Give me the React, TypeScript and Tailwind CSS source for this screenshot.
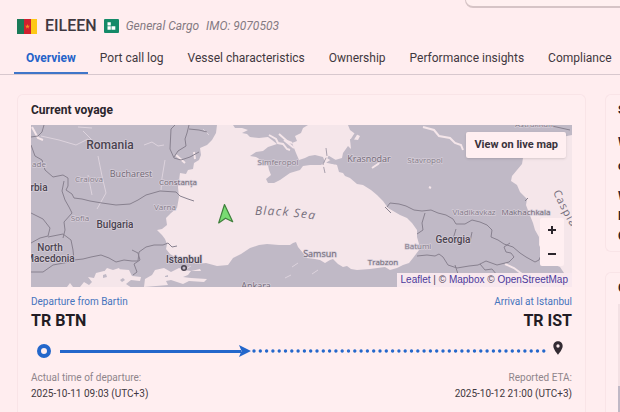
import React from "react";
import { MdLocationOn } from "react-icons/md";

interface MapLabel {
  text: string;
  x: number;
  y: number;
  kind: "country" | "city" | "town" | "small" | "faint";
}

const tabs = [
  "Overview",
  "Port call log",
  "Vessel characteristics",
  "Ownership",
  "Performance insights",
  "Compliance",
];

const labels: MapLabel[] = [
  { text: "Romania", x: 79, y: 24, kind: "country" },
  { text: "Bulgaria", x: 84, y: 103, kind: "city" },
  { text: "Georgia", x: 422, y: 118, kind: "city" },
  { text: "rbia", x: 8, y: 66, kind: "city" },
  { text: "North", x: 19, y: 126, kind: "city" },
  { text: "Macedonia", x: 19, y: 137, kind: "city" },
  { text: "Istanbul", x: 153, y: 138, kind: "city" },
  { text: "Bucharest", x: 100, y: 52, kind: "town" },
  { text: "Craiova", x: 58, y: 57, kind: "faint" },
  { text: "ade", x: 8, y: 42, kind: "faint" },
  { text: "Sofia", x: 49, y: 96, kind: "faint" },
  { text: "Constanța", x: 147, y: 60, kind: "small" },
  { text: "Varna", x: 134, y: 85, kind: "faint" },
  { text: "Simferopol", x: 247, y: 40, kind: "faint" },
  { text: "Krasnodar", x: 338, y: 37, kind: "town" },
  { text: "Stavropol", x: 394, y: 38, kind: "faint" },
  { text: "Samsun", x: 289, y: 132, kind: "town" },
  { text: "Trabzon", x: 352, y: 140, kind: "small" },
  { text: "Batumi", x: 387, y: 124, kind: "faint" },
  { text: "Vladikavkaz", x: 443, y: 90, kind: "faint" },
  { text: "Makhachkala", x: 495, y: 90, kind: "small" },
  { text: "Ankara", x: 225, y: 164, kind: "town" },
  { text: "Astrakhan", x: 503, y: 2, kind: "faint" },
];

const labelStyles = {
  country: "fill-[#4a4450] font-[Roboto,sans-serif] text-[12px] font-medium",
  city: "fill-[#4a4450] font-[Roboto,sans-serif] text-[10px] font-medium",
  town: "fill-[#6f6875] text-[9px]",
  small: "fill-[#6f6875] text-[8px]",
  faint: "fill-[#827b88] text-[8px]",
};

const CameroonFlag: React.FC = () => (
  <svg className="w-5 h-[15px]" viewBox="0 0 20 15" role="img" aria-label="Cameroon">
    <path fill="#1a7a58" d="M0 0h7v15H0z" />
    <path fill="#d0202f" d="M7 0h7v15H7z" />
    <path fill="#fdc916" d="M14 0h6v15h-6z" />
    <path
      fill="#f0901f"
      d="M10.5 5l.6 1.8H13l-1.5 1.1.6 1.8-1.6-1.1-1.6 1.1.6-1.8L8 6.800h1.900z"
    />
  </svg>
);

const CargoIcon: React.FC = () => (
  <svg className="w-[15px] h-[14px]" viewBox="0 0 15 14" role="img" aria-label="Cargo">
    <rect width="15" height="14" rx="1" fill="#148a68" />
    <path fill="#fff" d="M3.500 3.200h3.300v3.300H3.500zM3.500 7.200h3.300v3.600H3.500zM7.500 7.200h3.800v3.600H7.500z" />
  </svg>
);

const VoyageMap: React.FC = () => (
  <div className="relative h-[162px] overflow-hidden bg-[#c0b9c6]">
    <svg
      className="w-full h-full font-['Open_Sans',sans-serif]"
      viewBox="0 0 541 162"
      preserveAspectRatio="xMidYMid slice"
      role="img"
      aria-label="Map of the Black Sea"
    >
      {/* Black Sea and Sea of Azov */}
      <path
        fill="#f5e6ea"
        d="M202 0L186 0 185 8 181 15 176 20 169 23 170 30 168 35 163 38 162 44 157 45 155 49 149 48 148 56 147 62 148 72 146 83 140 88 135 93 136 100 131 104 126 105 131 110 134 114 136 119 135 124 139 129 149 135 158 136 166 139 175 138 186 141 197 140 202 133 210 129 219 123 228 120 236 119 248 120 259 120 262 118 265 117 267 122 272 128 276 133 284 134 289 135 294 138 299 135 302 134 307 139 312 142 316 141 320 144 326 145 339 144 354 142 359 145 366 143 372 140 378 138 382 133 388 125 388 119 386 112 386 105 381 98 376 93 369 90 357 83 352 76 346 70 340 65 332 60 326 59 319 53 314 51 312 48 308 47 306 40 299 38 304 35 311 33 312 28 317 21 320 24 319 14 327 15 329 11 323 8 319 5 317 0 277 0 272 3 270 8 264 11 266 16 261 18 265 28 268 35 274 33 278 31 284 30 292 32 294 37 290 40 279 40 272 41 269 45 259 48 249 55 243 58 237 58 235 54 240 50 238 45 237 40 230 35 225 32 219 31 225 27 232 26 237 22 246 19 241 15 237 12 228 13 219 12 216 9 211 8 217 5 211 3 204 3z"
      />
      {/* Crimean lagoons and spits */}
      <path
        fill="none"
        stroke="#f5e6ea"
        strokeWidth="2"
        d="M238 10l7 4 2 4 5 1 4 5 3 1M248 9l8 7 5 2M253 15l10 8M1 2l6 11 5 2"
      />
      <path fill="none" stroke="#c0b9c6" strokeWidth="3" d="M297 32l5 3-3 2 5 1M326 7l-5 8 2 9" />
      {/* Caspian Sea */}
      <path
        fill="#f5e6ea"
        d="M541 10L516 15 499 24 492 33 491 39 486 45 481 51 480 56 486 60 489 67 496 74 495 80 498 88 502 98 504 105 508 112 508 120 512 128 516 136 522 139 529 142 533 148 541 152z"
      />
      {/* Aegean and Marmara */}
      <path
        fill="#f5e6ea"
        d="M36 162l3-4 3 4zM49 162l4-5 5 3 3-3-4-5 6 1 2-5 8-2 6 2 7-4 12 1 3 6 9 1-1 4-9-1-5 4 6 4zM113 162l1-8 7-4 3-5 9-2 7 4 8-4 5 2 7 1-3 4-5 2 8 1 16 1-3 3-15-1-6 3-12-4-5 1 2 4zM72 148l4-5 6 2 6-2 3 5zM160 146l9-2 1 2z"
      />
      <path fill="#c0b9c6" d="M72 150l3-1 1 3-4 1zM89 155l3-2 2 2-3 2zM134 151l3-1v2h-3z" />
      {/* Rivers and lakes */}
      <path
        fill="none"
        stroke="#ddd3dd"
        strokeWidth="1"
        d="M10 11l18 4 17 5 12-6M52 6l9 9M67 31l4 20 4 17-9 16M57 50l4 20M134 35l-3 18-1 12M113 20l8-3 6 4 6-1M47 2l14 1M172 4l6 6M287 145l-6 4M254 153l6-3M261 142l6-4M160 141l-5 3"
      />
      <path
        fill="none"
        stroke="#f5e6ea"
        strokeWidth="2"
        d="M392 2l11 3 5 6 11 2 5 5 6 2 2 5M341 43l6-4 2-3M398 62l2 1M474 139l9 4 8 6M163 27l1 7M145 30l9 8"
      />
      {/* Borders */}
      <path
        fill="none"
        stroke="#88818f"
        strokeWidth="1"
        strokeLinejoin="round"
        d="M13 0l-2 7-4 4-7 1M0 20l4 11 7 4 3 10 8 7 5-1 5-1 5 3 0 8-2 4 6 4 2 4 8 1 8 2 12 2 14 2 14-1 8-4 8-5 14-4 16 1 4 4 8 3 6 2M33 56l-2 10 3 9 4 7 3 6-8 9 1 8-2 8M0 88l12 6 7 9-2 8-8 2-9 5M17 112l15-3 8 6 2 10 1 10-5 2-16 3-10 7-12 0M43 135l9-1 8-2 10-2 8 3 7 4 8-2 8 1 6 0 1-9 7-5 8-2 9 0 5-2 4 4 5-1M101 125l6 3 2 7-6 4 3 8-4 3M144 0l-4 4-1 20 4 9 7 2 9-3 9-5M158 0l-2 8-2 6 1 7-8 5-4 6M158 4l10 1 8 2M356 82l3-4 9 1 7 2 8 4 8 1 9-1 7 3 8 2 7 4 3 5 9 0 7-4 8 2 7 3 5 5-1 7 7 3 6 4 9 3 7 6 6 4 9 5 4-2 3-7M394 88l-3 10 1 7-6 4M386 131l10-1 8 1 4-2 4 3 5 8 9 3 12-2 9-1 8-4 11 4 12-3 5-5-3-4-5-1-2-5 6-4M424 140l3 9M449 139l5 6 7-1 5 6M494 76l3-3M360 88l-6-6M425 104l-3 10 7 5 10-2 2-10M501 0l20 1 18 4"
      />
      <path
        fill="none"
        stroke="#a79fac"
        strokeWidth="1"
        strokeDasharray="8 2"
        d="M295 23l1 8-4 8 2 9"
      />

      {labels.map((label) => (
        <text
          key={label.text}
          x={label.x}
          y={label.y}
          textAnchor="middle"
          stroke="#d6cdd8"
          strokeWidth="1.5"
          strokeLinejoin="round"
          paintOrder="stroke"
          className={labelStyles[label.kind]}
        >
          {label.text}
        </text>
      ))}

      <path id="black-sea" fill="none" d="M224 90Q255 89 290 96" />
      <text className="fill-[#77707d] text-[12px] italic tracking-widest">
        <textPath href="#black-sea">Black Sea</textPath>
      </text>
      <path id="caspian-sea" fill="none" d="M522 67Q531 88 544 108L590 180" />
      <text className="fill-[#77707d] text-[11px] tracking-widest">
        <textPath href="#caspian-sea">Caspian Sea</textPath>
      </text>

      <circle cx="153" cy="143" r="2.300" fill="#c0b9c6" stroke="#4a4450" strokeWidth="1.500" />
      {/* Vessel position */}
      <path
        d="M193.500 79.500l8.200 17.200-7.200-3.500-6.800 4.700z"
        fill="#78dc72"
        stroke="#3f7f3c"
        strokeWidth="1.200"
        strokeLinejoin="round"
      />
    </svg>

    <button className="absolute top-[7px] right-1.5 h-[26px] px-2 rounded-xs bg-[#ffeff1] text-[11px] font-bold text-[#3a333c] whitespace-nowrap shadow">
      View on live map
    </button>

    <div className="absolute right-2 bottom-[21px] w-6 flex flex-col rounded-xs bg-[#ffeff1]">
      <button aria-label="Zoom in" className="h-6 flex items-center justify-center">
        <svg className="w-2 h-2" viewBox="0 0 8 8">
          <path d="M4 0v8M0 4h8" stroke="#2b252c" strokeWidth="2" />
        </svg>
      </button>
      <button aria-label="Zoom out" className="h-6 flex items-center justify-center">
        <svg className="w-2 h-2" viewBox="0 0 8 8">
          <path d="M0 4h8" stroke="#2b252c" strokeWidth="2" />
        </svg>
      </button>
    </div>

    <div className="absolute right-0 bottom-0 h-[14px] px-1 bg-[#f8e8ee] font-['Liberation_Sans',sans-serif] text-[10px] leading-[14px] text-[#55475c] whitespace-nowrap">
      <a href="#leaflet" className="text-[#4c3a9c]">Leaflet</a> | ©{" "}
      <a href="#mapbox" className="text-[#4c3a9c]">Mapbox</a> ©{" "}
      <a href="#osm" className="text-[#4c3a9c]">OpenStreetMap</a>
    </div>
  </div>
);

const VoyageProgress: React.FC<{ percent: number }> = ({ percent }) => (
  <div className="flex items-center h-5 pl-[5px] pr-1.5">
    <svg className="w-4 h-4 mr-2 shrink-0" viewBox="0 0 16 16">
      <circle cx="8" cy="8" r="5" fill="none" stroke="#2467cb" strokeWidth="4" />
    </svg>
    <div className="flex-1 flex items-center">
      <div className="flex items-center" style={{ width: `${percent}%` }}>
        <div className="flex-1 h-[3px] bg-[#2467cb]" />
        <svg className="w-3 h-3 -ml-0.5 shrink-0" viewBox="0 0 12 12">
          <path d="M0 0l12 6-12 6 2.500-6z" fill="#2467cb" />
        </svg>
      </div>
      <svg className="flex-1 h-1">
        <line
          x1="3"
          x2="100%"
          y1="2"
          y2="2"
          stroke="#2467cb"
          strokeWidth="3.400"
          strokeLinecap="round"
          strokeDasharray="0 6.300"
        />
      </svg>
    </div>
    <MdLocationOn className="w-4 h-4 mb-1.5 shrink-0 text-[#332b33]" />
  </div>
);

const App: React.FC = () => {
  return (
    <div className="h-screen flex flex-col overflow-hidden bg-[#ffedef] font-[Roboto,sans-serif] text-[#3f3840]">
      {/* Search panel edge */}
      <div className="flex justify-end">
        <div className="w-1/4 h-2 rounded-bl-xl border-b-2 border-l border-[#d6c4c6] bg-[#fff0f0]" />
      </div>

      <header className="flex items-center h-9 pl-[17px] whitespace-nowrap">
        <CameroonFlag />
        <h1 className="ml-2 mr-[7px] text-[16px] font-medium">EILEEN</h1>
        <CargoIcon />
        <p className="ml-[7px] flex gap-[7px] text-[12px] italic text-[#847a82]">
          <span>General Cargo</span>
          <span>IMO: 9070503</span>
        </p>
      </header>

      <nav className="flex h-[31px] pl-[14px] border-b border-[#d8c8ce] whitespace-nowrap">
        {tabs.map((tab, index) => (
          <button
            key={tab}
            className={
              index === 0
                ? "px-3 border-b-2 border-[#3f76c9] text-[12px] font-bold text-[#2563c9]"
                : "px-3 border-b-2 border-transparent text-[12px]"
            }
          >
            {tab}
          </button>
        ))}
      </nav>

      <main className="flex-1 min-h-0 flex gap-[19px] pt-[19px] pl-[17px]">
        <section className="flex-1 min-w-0 px-[13px] pt-[7px] rounded-t-md border border-b-0 border-[#f9e4e7] bg-[#ffeef0]">
          <h2 className="mb-[7px] text-[12px] leading-4 font-bold text-[#2b252c]">
            Current voyage
          </h2>
          <VoyageMap />

          <div className="flex justify-between mt-2">
            <div>
              <a href="#bartin" className="block text-[10px] leading-[14px] text-[#4674bd]">
                Departure from Bartin
              </a>
              <p className="text-[16px] leading-6 font-bold text-[#221c24]">TR BTN</p>
            </div>
            <div className="text-right">
              <a href="#istanbul" className="block text-[10px] leading-[14px] text-[#4674bd]">
                Arrival at Istanbul
              </a>
              <p className="text-[16px] leading-6 font-bold text-[#221c24]">TR IST</p>
            </div>
          </div>

          <div className="mt-2">
            <VoyageProgress percent={39} />
          </div>

          <div className="flex justify-between mt-[9px] text-[10px] leading-4">
            <div>
              <p className="text-[#8f858b]">Actual time of departure:</p>
              <p>2025-10-11 09:03 (UTC+3)</p>
            </div>
            <div className="text-right">
              <p className="text-[#8f858b]">Reported ETA:</p>
              <p>2025-10-12 21:00 (UTC+3)</p>
            </div>
          </div>
        </section>

        {/* Side column, cut off by the window */}
        <aside className="w-[15px] shrink-0 flex flex-col gap-5 overflow-hidden text-[12px] font-bold text-[#2b252c]">
          <div className="h-[158px] shrink-0 pl-3 pt-[7px] rounded-l-md border border-r-0 border-[#f9e4e7] bg-[#ffeef0]">
            <p className="leading-4">S</p>
            <p className="mt-3 leading-6">W</p>
            <p className="leading-6">o</p>
            <p className="mt-2 leading-5">W</p>
            <p className="leading-5">E</p>
            <p className="leading-5">C</p>
          </div>
          <div className="flex-1 min-h-0 flex flex-col pl-3 pt-[7px] rounded-tl-md border border-r-0 border-b-0 border-[#f9e4e7] bg-[#ffeef0]">
            <p className="leading-4">G</p>
            <div className="mt-2 h-[82px] shrink-0 bg-[#f3e1e4]" />
            <div className="flex-1 bg-[#c0b9c6]" />
          </div>
        </aside>
      </main>
    </div>
  );
};

export default App;
